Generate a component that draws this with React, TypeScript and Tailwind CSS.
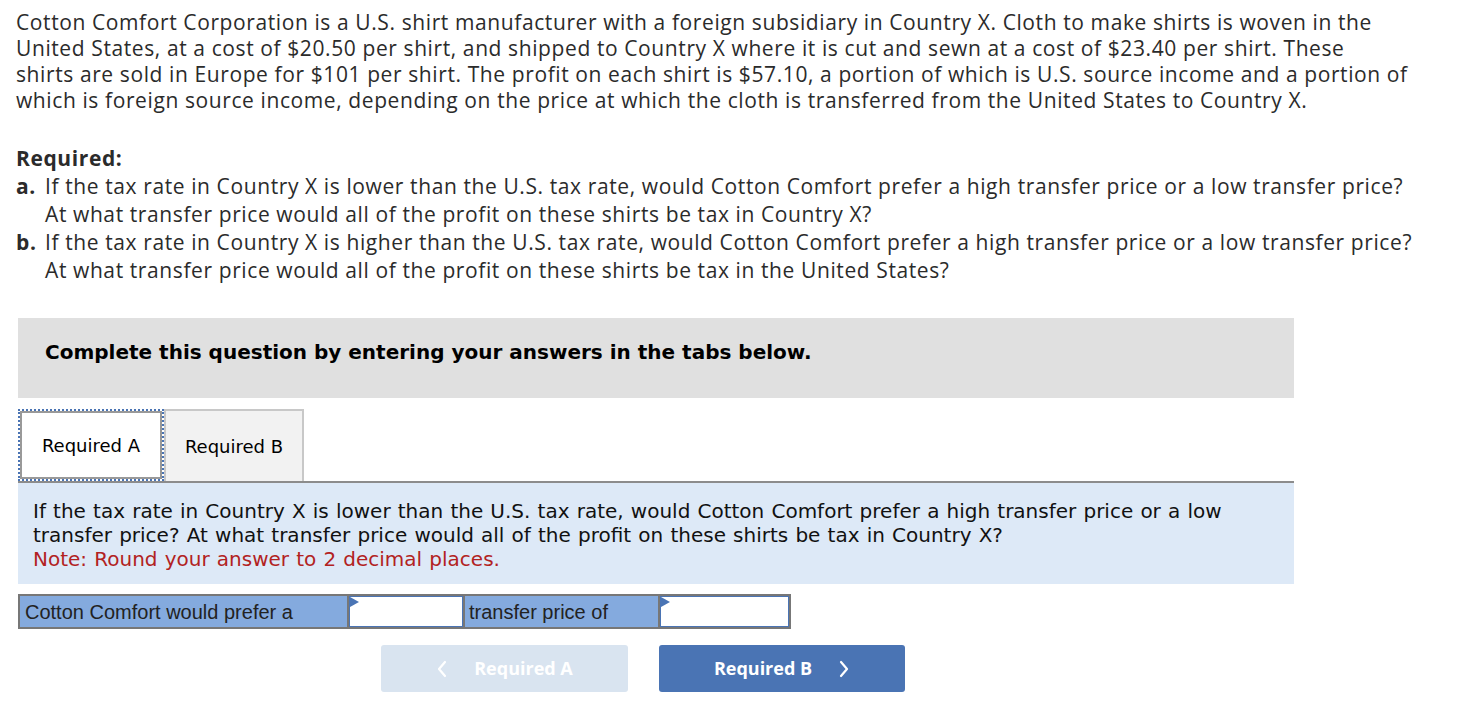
import React from "react";

function Arrow() {
  return (
    <svg width="9" height="10" viewBox="0 0 9 10" className="absolute left-0 top-0">
      <polygon points="0,0 9,5 0,10" fill="#4a74b4" />
    </svg>
  );
}

function Chevron({ dir }: { dir: "left" | "right" }) {
  return (
    <svg width="12" height="18" viewBox="0 0 12 18" fill="none" stroke="currentColor" strokeWidth="2.2" strokeLinecap="round" strokeLinejoin="round">
      {dir === "left" ? <polyline points="9,2 3,9 9,16" /> : <polyline points="3,2 9,9 3,16" />}
    </svg>
  );
}

export default function App() {
  return (
    <div className="w-[1466px] h-[724px] bg-white overflow-hidden">
      <div className="pl-4 pt-[9px] text-[#2b2b2b] text-[21px] leading-[26px] tracking-[0.6px] whitespace-nowrap font-['Open_Sans','Lato',sans-serif]">
        <p>
          Cotton Comfort Corporation is a U.S. shirt manufacturer with a foreign subsidiary in Country X. Cloth to make shirts is woven in the
          <br />
          United States, at a cost of $20.50 per shirt, and shipped to Country X where it is cut and sewn at a cost of $23.40 per shirt. These
          <br />
          shirts are sold in Europe for $101 per shirt. The profit on each shirt is $57.10, a portion of which is U.S. source income and a portion of
          <br />
          which is foreign source income, depending on the price at which the cloth is transferred from the United States to Country X.
        </p>
        <div className="mt-[31px] leading-[28px]">
          <div className="font-bold">Required:</div>
          <div className="flex">
            <span className="w-[29px] font-bold">a.</span>
            <span>
              If the tax rate in Country X is lower than the U.S. tax rate, would Cotton Comfort prefer a high transfer price or a low transfer price?
              <br />
              At what transfer price would all of the profit on these shirts be tax in Country X?
            </span>
          </div>
          <div className="flex">
            <span className="w-[29px] font-bold">b.</span>
            <span>
              If the tax rate in Country X is higher than the U.S. tax rate, would Cotton Comfort prefer a high transfer price or a low transfer price?
              <br />
              At what transfer price would all of the profit on these shirts be tax in the United States?
            </span>
          </div>
        </div>
      </div>

      <div className="ml-[18px] w-[1276px] mt-[34px] font-['DejaVu_Sans','Verdana',sans-serif]">
        <div className="h-[80px] bg-[#e0e0e0] flex items-center pl-[27px] pb-[12px] text-[20px] font-bold text-black">
          Complete this question by entering your answers in the tabs below.
        </div>
        <div className="mt-[11px] flex items-end border-b-2 border-[#8c8c8c]">
          <div className="outline-[2px] outline-dotted outline-[#4a74b4] -outline-offset-[2px] p-[2px]">
            <div className="w-[142px] h-[68px] border-2 border-[#999] bg-white flex items-center justify-center text-[18px] text-black">
              Required A
            </div>
          </div>
          <div className="w-[140px] h-[72px] border-2 border-b-0 border-[#c8c8c8] bg-[#f2f2f2] flex items-center justify-center text-[18px] text-black">
            Required B
          </div>
        </div>
        <div className="bg-[#dde9f7] h-[101px] pl-[15px] pt-[16px] text-[20px] leading-[24px] [word-spacing:0.8px] text-[#111]">
          If the tax rate in Country X is lower than the U.S. tax rate, would Cotton Comfort prefer a high transfer price or a low
          <br />
          transfer price? At what transfer price would all of the profit on these shirts be tax in Country X?
          <br />
          <span className="text-[#b22222]">Note: Round your answer to 2 decimal places.</span>
        </div>
      </div>

      <div className="ml-[18px] mt-[10px] flex w-[773px] h-[35px] border-2 border-[#777] bg-[#777] gap-[2px] font-['Liberation_Sans',Arial,sans-serif] text-[20px] text-[#222]">
        <div className="w-[327px] bg-[#84aade] flex items-center pl-[5px]">Cotton Comfort would prefer a</div>
        <div className="relative w-[114px] bg-white border border-[#4a74b4]"><Arrow /></div>
        <div className="w-[193px] bg-[#84aade] flex items-center pl-[4px]">transfer price of</div>
        <div className="relative flex-1 bg-white border border-[#4a74b4]"><Arrow /></div>
      </div>

      <div className="ml-[381px] mt-[16px] flex gap-[31px] font-['Open_Sans',sans-serif] text-[18px] font-bold">
        <div className="w-[247px] h-[47px] rounded-[3px] bg-[#d9e4f0] text-white flex items-center justify-center gap-[26px]">
          <Chevron dir="left" />
          <span>Required A</span>
        </div>
        <div className="w-[246px] h-[47px] rounded-[3px] bg-[#4a74b4] text-white flex items-center justify-center gap-[26px]">
          <span>Required B</span>
          <Chevron dir="right" />
        </div>
      </div>
    </div>
  );
}
